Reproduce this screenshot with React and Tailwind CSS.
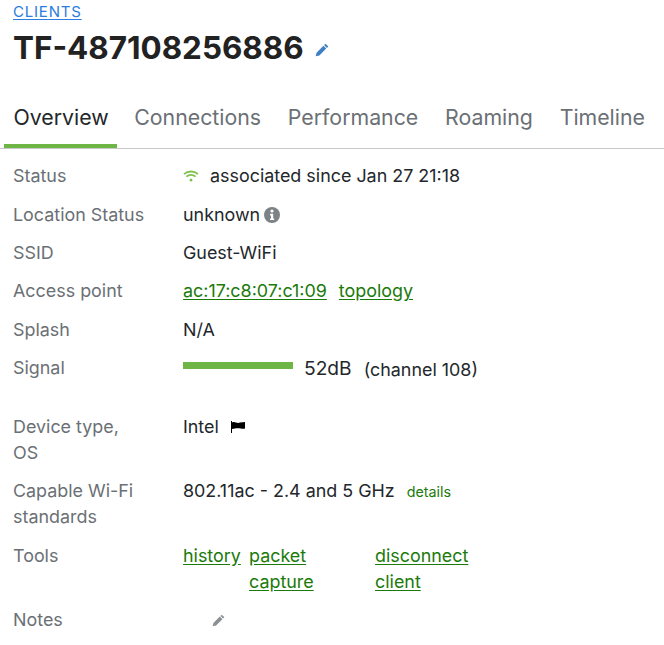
const linkClass = 'text-[#1a7a0a] underline underline-offset-2'

const PencilIcon = ({ className }) => (
  <svg viewBox="0 0 16 16" className={className} fill="currentColor">
    <path d="M12 .8 15.2 4 13.6 5.6 10.4 2.4Z" />
    <path d="M9.6 3.2 12.8 6.4 5 14.2 .8 15.2 1.8 11Z" />
  </svg>
)

const Row = ({ label, className = '', children }) => (
  <div className={`flex py-[6.2px] ${className}`}>
    <div className="w-[170px] shrink-0 pr-2 text-[#6b7075]">{label}</div>
    <div className="flex-1 text-[#23272b]">{children}</div>
  </div>
)

const App = () => {
  const tabs = ['Connections', 'Performance', 'Roaming', 'Timeline']

  return (
    <div className="h-[645px] overflow-hidden bg-white text-[17.9px] leading-[26px]" style={{ fontFamily: 'Inter, sans-serif' }}>
      <div className="px-[13px]">
        <a className="block text-[15px] leading-[24px] tracking-[0.8px] text-[#2a7de1] underline underline-offset-2">CLIENTS</a>
        <div className="mt-[3px] flex items-center">
          <h1 className="text-[31.4px] font-bold leading-[43px] text-[#222222]">TF-487108256886</h1>
          <PencilIcon className="ml-[11px] mt-[2px] h-[14px] w-[14px] text-[#3f7fc4]" />
        </div>
      </div>

      <div className="mt-[32px] flex overflow-hidden border-b border-[#c8c8c8] pl-[4px] text-[21.3px] leading-[30px]">
        <div className="-mb-px mr-[4px] border-b-[5px] border-[#6db544] pl-[9.5px] pr-[8.2px] pb-[12px] text-[#23272b]">Overview</div>
        {tabs.map((tab) => (
          <div key={tab} className="px-[13.4px] pb-[12px] text-[#6b7075]">{tab}</div>
        ))}
      </div>

      <div className="mt-[8px] px-[13px]">
        <Row label="Status">
          <span className="flex items-center">
            <svg viewBox="0 0 16 12" className="mr-[11px] h-[12px] w-[16px] text-[#7fc24f]" fill="none" stroke="currentColor" strokeWidth="1.8">
              <path d="M1 4.2C5 .6 11 .6 15 4.2" />
              <path d="M3.4 6.6C6 4.3 10 4.3 12.6 6.6" />
              <circle cx="8" cy="10" r="1.5" fill="currentColor" stroke="none" />
            </svg>
            associated since Jan 27 21:18
          </span>
        </Row>
        <Row label="Location Status">
          <span className="flex items-center">
            unknown
            <svg viewBox="0 0 16 16" className="ml-[4px] h-[16px] w-[16px]">
              <circle cx="8" cy="8" r="8" fill="#7d8287" />
              <circle cx="8" cy="4" r="1.6" fill="#fff" />
              <path d="M6 6.8H9.2V11.4H10.2V13H6V11.4H7V8.4H6Z" fill="#fff" />
            </svg>
          </span>
        </Row>
        <Row label="SSID">Guest-WiFi</Row>
        <Row label="Access point">
          <a className={linkClass}>ac:17:c8:07:c1:09</a>
          <a className={`ml-[12px] ${linkClass}`}>topology</a>
        </Row>
        <Row label="Splash">N/A</Row>
        <Row label="Signal" className="mb-[20.5px]">
          <span className="flex items-center">
            <span className="mb-[5px] h-[7px] w-[110px] bg-[#6db544]" />
            <span className="ml-[11px] text-[19.2px]">52dB</span>
            <span className="ml-[12px] translate-y-[2px]">(channel 108)</span>
          </span>
        </Row>
        <Row label={<>Device type,<br />OS</>}>
          <span className="flex items-center">
            Intel
            <svg viewBox="0 0 14 12" className="ml-[12px] h-[12px] w-[14px]">
              <path d="M0 0H1V12H0Z" fill="#000" />
              <path d="M1 1.5C4 0 6 3 9 1.5L14 1V7.5C11 8.5 8 6 1 8Z" fill="#000" />
            </svg>
          </span>
        </Row>
        <Row label={<>Capable Wi-Fi<br />standards</>}>
          802.11ac - 2.4 and 5 GHz
          <a className="ml-[12px] text-[14.3px] text-[#1a7a0a]">details</a>
        </Row>
        <Row label="Tools">
          <div className="flex">
            <div className="w-[66px]"><a className={linkClass}>history</a></div>
            <div className="w-[126px]"><a className={linkClass}>packet<br />capture</a></div>
            <div><a className={linkClass}>disconnect<br />client</a></div>
          </div>
        </Row>
        <Row label="Notes">
          <PencilIcon className="ml-[29px] mt-[7px] h-[13px] w-[13px] text-[#8a8f94]" />
        </Row>
      </div>
    </div>
  )
}

export default App
